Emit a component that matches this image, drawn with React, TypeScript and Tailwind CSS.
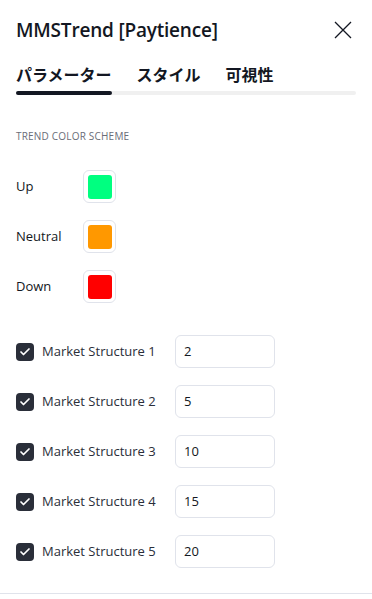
import { Check } from "lucide-react";

const colors = [
  { label: "Up", color: "bg-[#00ff80]" },
  { label: "Neutral", color: "bg-[#ff9800]" },
  { label: "Down", color: "bg-[#ff0000]" },
];

const structures = [
  { label: "Market Structure 1", value: "2" },
  { label: "Market Structure 2", value: "5" },
  { label: "Market Structure 3", value: "10" },
  { label: "Market Structure 4", value: "15" },
  { label: "Market Structure 5", value: "20" },
];

export default function App() {
  return (
    <div className="flex h-[599px] w-[372px] flex-col bg-white text-[#131722] font-['Open_Sans','Noto_Sans_CJK_JP',sans-serif]">
      <div className="flex h-[60px] items-center justify-between pl-4 pr-[20px]">
        <h2 className="text-[19px] font-semibold tracking-[-0.2px]">MMSTrend [Paytience]</h2>
        <button className="text-[#131722]">
          <svg width="18" height="18" viewBox="0 0 18 18" fill="none" stroke="currentColor" strokeWidth="1.3">
            <path d="M1 1L17 17M17 1L1 17" />
          </svg>
        </button>
      </div>

      <div className="px-4">
        <div className="flex gap-[25px] pt-[2px] font-['Noto_Sans_CJK_JP',sans-serif] text-[16px] font-bold leading-[24px]">
          <span>パラメーター</span>
          <span>スタイル</span>
          <span>可視性</span>
        </div>
        <div className="mt-[5px] flex h-[4px] rounded-full bg-[#f0f0f0]">
          <div className="h-full w-[96px] rounded-full bg-[#131722]" />
        </div>
      </div>

      <div className="flex-1 px-4">
        <div className="mt-[34px] text-[10px] uppercase tracking-[0.2px] text-[#6a6d78]">Trend Color Scheme</div>

        <div className="mt-[26px] flex flex-col gap-[17px]">
          {colors.map((c) => (
            <div key={c.label} className="flex h-[33px] items-center">
              <span className="w-[67px] text-[13px]">{c.label}</span>
              <div className="flex h-[33px] w-[33px] items-center justify-center rounded-[6px] border border-[#e0e3eb]">
                <div className={`h-[24px] w-[24px] rounded-[3px] ${c.color}`} />
              </div>
            </div>
          ))}
        </div>

        <div className="mt-[32px] flex flex-col gap-[17px]">
          {structures.map((s) => (
            <div key={s.label} className="flex h-[33px] items-center">
              <div className="flex h-[18px] w-[18px] items-center justify-center rounded-[4px] bg-[#2a2e39]">
                <Check className="h-[12px] w-[12px] text-white" strokeWidth={3.5} />
              </div>
              <span className="ml-[8px] w-[133px] text-[13px] text-[#2a2e39]">{s.label}</span>
              <div className="flex h-[33px] w-[100px] items-center rounded-[6px] border border-[#e0e3eb] px-[8px] text-[13px]">
                {s.value}
              </div>
            </div>
          ))}
        </div>
      </div>

      <div className="mb-[5px] h-px bg-[#e0e3eb]" />
    </div>
  );
}
